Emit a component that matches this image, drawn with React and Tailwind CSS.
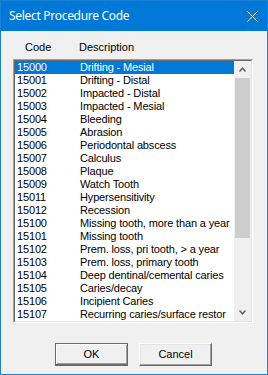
import React from "react";

const rows = [
  ["15000", "Drifting - Mesial"],
  ["15001", "Drifting - Distal"],
  ["15002", "Impacted - Distal"],
  ["15003", "Impacted - Mesial"],
  ["15004", "Bleeding"],
  ["15005", "Abrasion"],
  ["15006", "Periodontal abscess"],
  ["15007", "Calculus"],
  ["15008", "Plaque"],
  ["15009", "Watch Tooth"],
  ["15011", "Hypersensitivity"],
  ["15012", "Recession"],
  ["15100", "Missing tooth, more than a year"],
  ["15101", "Missing tooth"],
  ["15102", "Prem. loss, pri tooth, > a year"],
  ["15103", "Prem. loss, primary tooth"],
  ["15104", "Deep dentinal/cemental caries"],
  ["15105", "Caries/decay"],
  ["15106", "Incipient Caries"],
  ["15107", "Recurring caries/surface restor"],
];

export default function App() {
  return (
    <div className="w-[268px] h-[375px] bg-[#f0f0f0] border border-[#1883d7] flex flex-col overflow-hidden" style={{ fontFamily: '"Liberation Sans", Arial, sans-serif' }}>
      <div className="h-[30px] shrink-0 bg-[#0078d7] flex items-center justify-between pl-[8px] pr-[9px]">
        <span className="text-white text-[12px] leading-none tracking-[-0.3px]" style={{ fontFamily: '"Noto Sans", sans-serif' }}>Select Procedure Code</span>
        <svg width="11" height="11" viewBox="0 0 11 11" className="mt-[1px]">
          <path d="M0.5 0.5 L10.5 10.5 M10.5 0.5 L0.5 10.5" stroke="white" strokeWidth="1" />
        </svg>
      </div>
      <div className="flex mt-[10px] h-[13px] text-[11px] leading-[13px] text-black">
        <span className="ml-[24px] w-[54px]">Code</span>
        <span>Description</span>
      </div>
      <div className="mt-[5px] ml-[12px] w-[240px] h-[264px] border-t border-l border-[#a0a0a0] border-b border-r border-b-white border-r-white shrink-0">
        <div className="w-full h-full border-t border-l border-t-[#696969] border-l-[#696969] border-b border-r border-b-[#e3e3e3] border-r-[#e3e3e3] bg-white flex">
          <div className="flex-1 flex flex-col text-[11px] leading-[13px] tracking-[-0.15px]">
            {rows.map(([c, d], i) => (
              <div key={c} className={"h-[13px] flex whitespace-nowrap overflow-hidden " + (i === 0 ? "bg-[#0078d7] text-white" : "text-black")}>
                <span className="pl-[2px] w-[65px] shrink-0">{c}</span>
                <span>{d}</span>
              </div>
            ))}
          </div>
          <div className="w-[17px] bg-[#f0f0f0] flex flex-col shrink-0">
            <div className="h-[17px] flex items-center justify-center">
              <svg width="7" height="5" viewBox="0 0 7 5">
                <path d="M0.5 4.5 L3.5 1.2 L6.5 4.5" stroke="#606060" strokeWidth="1.5" fill="none" />
              </svg>
            </div>
            <div className="h-[160px] mx-[1px] bg-[#cdcdcd]" />
            <div className="flex-1" />
            <div className="h-[17px] flex items-center justify-center">
              <svg width="7" height="5" viewBox="0 0 7 5">
                <path d="M0.5 0.5 L3.5 3.8 L6.5 0.5" stroke="#606060" strokeWidth="1.5" fill="none" />
              </svg>
            </div>
          </div>
        </div>
      </div>
      <div className="flex justify-center gap-[11px] mt-[20px] ml-[-1px]">
        <button className="w-[73px] h-[23px] border border-[#696969] border-b-2 bg-[#f0f0f0] shadow-[inset_1px_1px_0_#ffffff,inset_-1px_-1px_0_#a0a0a0] text-[11px] text-black flex items-center justify-center">
          OK
        </button>
        <button className="w-[73px] h-[23px] border border-t-white border-l-white border-b-[#696969] border-r-[#696969] bg-[#f0f0f0] shadow-[inset_-1px_-1px_0_#a0a0a0,inset_1px_1px_0_#e3e3e3] text-[11px] text-black flex items-center justify-center">
          Cancel
        </button>
      </div>
    </div>
  );
}
